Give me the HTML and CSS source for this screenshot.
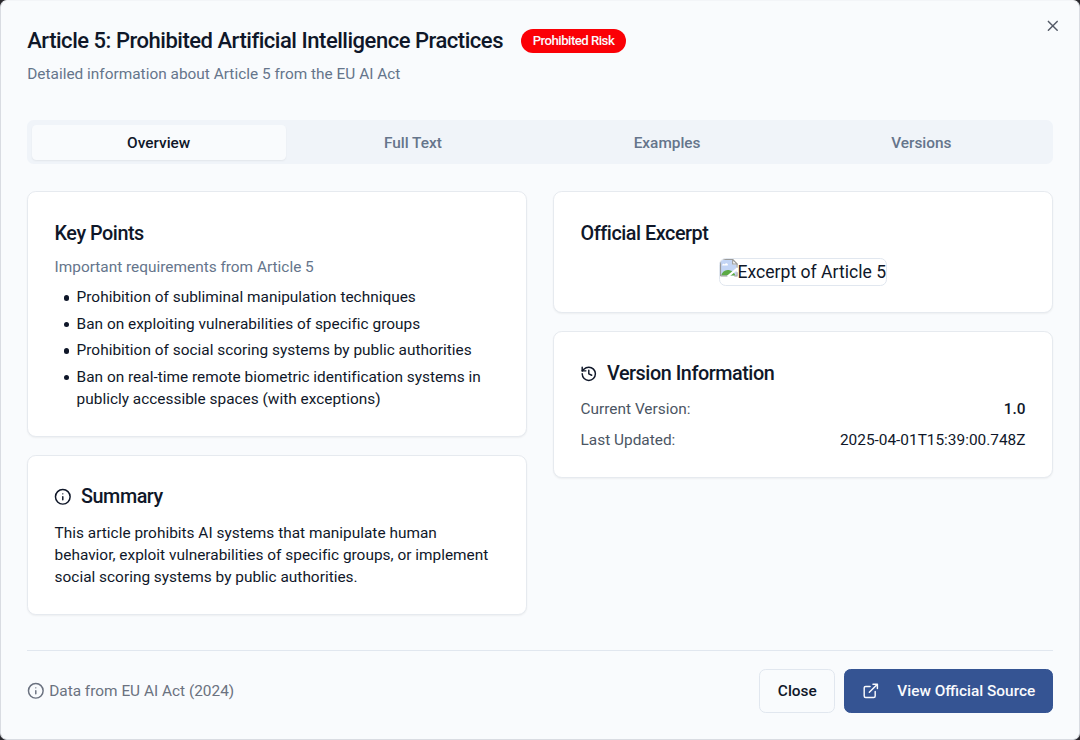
FILE: index.html
```html
<!DOCTYPE html>
<html lang="en">
<head>
<meta charset="utf-8">
<title>Article 5: Prohibited Artificial Intelligence Practices</title>
<link rel="stylesheet" href="styles.css">
</head>
<body>
<main class="dialog" role="dialog">
  <header class="header">
    <div class="title-row">
      <h1 class="title">Article 5: Prohibited Artificial Intelligence Practices</h1>
      <span class="badge">Prohibited Risk</span>
    </div>
    <p class="subtitle">Detailed information about Article 5 from the EU AI Act</p>
    <button class="dismiss" aria-label="Close dialog"><svg class="icon" viewBox="0 0 24 24"><path d="M18 6 6 18M6 6l12 12"/></svg></button>
  </header>
  <nav class="tabs">
    <button class="tab active">Overview</button>
    <button class="tab">Full Text</button>
    <button class="tab">Examples</button>
    <button class="tab">Versions</button>
  </nav>
  <section class="content">
    <div class="column">
      <article class="card">
        <h2 class="card-title">Key Points</h2>
        <p class="card-subtitle">Important requirements from Article 5</p>
        <ul class="points">
          <li>Prohibition of subliminal manipulation techniques</li>
          <li>Ban on exploiting vulnerabilities of specific groups</li>
          <li>Prohibition of social scoring systems by public authorities</li>
          <li>Ban on real-time remote biometric identification systems in publicly accessible spaces (with exceptions)</li>
        </ul>
      </article>
      <article class="card compact">
        <h2 class="card-title"><svg class="icon" viewBox="0 0 24 24"><circle cx="12" cy="12" r="10"/><path d="M12 16v-4M12 8h.01"/></svg>Summary</h2>
        <p class="summary">This article prohibits AI systems that manipulate human behavior, exploit vulnerabilities of specific groups, or implement social scoring systems by public authorities.</p>
      </article>
    </div>
    <div class="column">
      <article class="card">
        <h2 class="card-title">Official Excerpt</h2>
        <div class="excerpt">
          <span class="missing-image"><svg class="picture" viewBox="0 0 16 16"><path fill="#c3d5f5" d="M0 1h11v4h4v10H0z"/><path fill="#fff" d="M2 6c0-2 2-2 2.500-1C5 3 8 4 7 6z"/><path fill="#5caa45" d="M1 15c1-3 3-5 6-5s6 2 7 5z"/><path fill="none" stroke="#9a9a9a" d="M.5 15.500V.5h11l4 4V8M.5 15.500H7M13 15.500h2.500V12"/><path fill="#fff" stroke="#9a9a9a" d="M11.500.500v4h4z"/><path stroke="#fff" stroke-width="2" d="M7 16 16 8.500"/></svg>Excerpt of Article 5</span>
        </div>
      </article>
      <article class="card">
        <h2 class="card-title"><svg class="icon" viewBox="0 0 24 24"><path d="M3 12a9 9 0 1 0 9-9 9.750 9.750 0 0 0-6.740 2.740L3 8"/><path d="M3 3v5h5M12 7v5l4 2"/></svg>Version Information</h2>
        <dl class="facts">
          <div class="fact"><dt>Current Version:</dt><dd class="strong">1.0</dd></div>
          <div class="fact"><dt>Last Updated:</dt><dd>2025-04-01T15:39:00.748Z</dd></div>
        </dl>
      </article>
    </div>
  </section>
  <footer class="footer">
    <div class="source"><svg class="icon" viewBox="0 0 24 24"><circle cx="12" cy="12" r="10"/><path d="M12 16v-4M12 8h.01"/></svg>Data from EU AI Act (2024)</div>
    <div class="actions">
      <button class="button">Close</button>
      <button class="button primary"><svg class="icon" viewBox="0 0 24 24"><path d="M15 3h6v6M10 14 21 3M18 13v6a2 2 0 0 1-2 2H5a2 2 0 0 1-2-2V8a2 2 0 0 1 2-2h6"/></svg>View Official Source</button>
    </div>
  </footer>
</main>
</body>
</html>
```
FILE: styles.css
```css
* { box-sizing: border-box; }
body { margin: 0; background: #28272c; color: #0f1729; font: 15.4px/22px Roboto, sans-serif; }
h1, h2, p, ul, dl, dd { margin: 0; padding: 0; }
button { font: inherit; color: inherit; border: 0; background: none; padding: 0; }
.dialog { height: 740px; padding: 25px 26.200px 26px; background: #f9fbfd; border: 1px solid #d9dce2; border-top-color: #f3f5f8; border-radius: 7px; overflow: hidden; display: flex; flex-direction: column; }
.icon { width: 17.600px; height: 17.600px; flex: none; fill: none; stroke: currentColor; stroke-width: 2; stroke-linecap: round; stroke-linejoin: round; }
.header { position: relative; flex: none; height: 94.400px; }
.title-row { display: flex; align-items: center; gap: 18px; height: 30px; }
.title { font-size: 22px; line-height: 30px; font-weight: 500; letter-spacing: -.475px; }
.badge { height: 24px; padding: 0 11.700px; border-radius: 12px; background: #fb0006; color: #f9fafd; font-size: 13.200px; line-height: 24px; font-weight: 500; letter-spacing: -.52px; }
.subtitle { margin-top: 7px; color: #65758b; letter-spacing: .01px; }
.dismiss { position: absolute; top: -9px; right: -9px; width: 17.600px; height: 17.600px; opacity: .7; display: flex; }
.tabs { flex: none; display: grid; grid-template-columns: repeat(4, 1fr); height: 44px; padding: 4.400px; background: #f0f4f9; border-radius: 6.600px; color: #65758b; }
.tab { border-radius: 4.400px; padding-top: 1.500px; font-weight: 500; }
.tab.active { background: #f9fbfd; color: #0f1729; box-shadow: 0 1px 2px rgb(0 0 0 / .06); }
.content { flex: none; display: grid; grid-template-columns: 1fr 1fr; gap: 26.400px; margin-top: 26.600px; height: 459.500px; align-items: start; }
.column { display: grid; gap: 17.600px; }
.card { padding: 27.200px 26.400px 26.400px; background: #fff; border: 1px solid #e6eaef; border-radius: 8.800px; box-shadow: 0 1px 2px rgb(0 0 0 / .05); }
.card.compact { padding-top: 26.200px; padding-bottom: 26px; }
.card-title { display: flex; align-items: center; gap: 9.400px; height: 29px; font-size: 19.800px; line-height: 29px; font-weight: 500; letter-spacing: -.46px; }
.card-title .icon { margin-left: -.5px; }
.card-subtitle { margin-top: 8px; color: #65758b; }
.points { margin-top: 8px; padding-left: 22px; list-style: none; letter-spacing: .01px; }
.points li { position: relative; }
.points li::before { content: ""; position: absolute; left: -13px; top: 9px; width: 5.500px; height: 5.500px; border-radius: 50%; background: currentColor; }
.points li + li { margin-top: 4.600px; }
.summary { margin-top: 11px; letter-spacing: .01px; }
.excerpt { margin-top: 10px; display: flex; justify-content: center; }
.missing-image { display: flex; height: 27.500px; border: 1px solid #e1e7ef; border-radius: 6.600px; overflow: hidden; font-size: 17.600px; line-height: 26px; }
.picture { width: 17.600px; height: 17.600px; flex: none; }
.facts { margin-top: 10px; }
.fact { display: flex; justify-content: space-between; }
.fact + .fact { margin-top: 9px; }
.fact dt { color: #4b5563; }
.strong { font-weight: 500; }
.footer { display: flex; justify-content: space-between; align-items: flex-start; padding-top: 17.600px; border-top: 1px solid #e1e7ef; }
.source { display: flex; align-items: center; gap: 4.400px; height: 44px; color: #6b7280; }
.actions { display: flex; gap: 8.800px; }
.button { display: flex; align-items: center; height: 44px; padding: 0 17.600px; border: 1px solid #e1e7ef; border-radius: 6.600px; font-weight: 500; }
.button.primary { gap: 17.600px; padding: 0 16.600px 0 17px; border-color: #355493; background: #355493; color: #f9fafd; }
```
